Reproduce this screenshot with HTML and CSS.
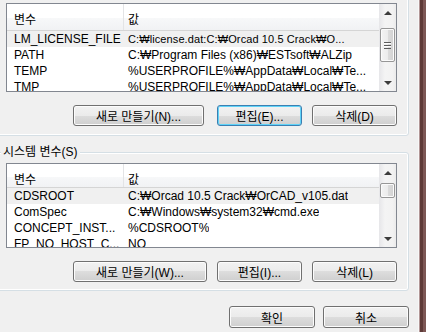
FILE: index.html
```html
<!DOCTYPE html>
<html lang="ko">

<head>
<title>환경 변수</title>
<meta charset="UTF-8">
<meta name="viewport" content="width=device-width, initial-scale=1.0">

<link rel="stylesheet" href="styles.css">
</head>

<body>
<div class="dialog">
<div class="pane">

<!-- user variables (group label is cut off above) -->
<div class="group group-user">
<div class="list list-user">
<div class="grid">
<div class="head"><span class="cell-name">변수</span><span class="cell-value">값</span></div>
<div class="row selected"><span class="cell-name">LM_LICENSE_FILE</span><span class="cell-value cell-long">C:₩license.dat:C:₩Orcad 10.5 Crack₩O...</span></div>
<div class="row"><span class="cell-name">PATH</span><span class="cell-value">C:₩Program Files (x86)₩ESTsoft₩ALZip</span></div>
<div class="row"><span class="cell-name">TEMP</span><span class="cell-value">%USERPROFILE%₩AppData₩Local₩Te...</span></div>
<div class="row"><span class="cell-name">TMP</span><span class="cell-value">%USERPROFILE%₩AppData₩Local₩Te...</span></div>
</div>
<div class="vscroll">
<div class="arrow up"></div>
<div class="track"><div class="thumb"><span class="grip"></span></div></div>
<div class="arrow down"></div>
</div>
</div>
<div class="buttons">
<button class="btn btn-new">새로 만들기(N)...</button>
<button class="btn btn-default">편집(E)...</button>
<button class="btn">삭제(D)</button>
</div>
</div>

<!-- system variables -->
<fieldset class="group group-system">
<legend>시스템 변수(S)</legend>
<div class="list list-system">
<div class="grid">
<div class="head"><span class="cell-name">변수</span><span class="cell-value">값</span></div>
<div class="row selected"><span class="cell-name">CDSROOT</span><span class="cell-value">C:₩Orcad 10.5 Crack₩OrCAD_v105.dat</span></div>
<div class="row"><span class="cell-name">ComSpec</span><span class="cell-value">C:₩Windows₩system32₩cmd.exe</span></div>
<div class="row"><span class="cell-name">CONCEPT_INST...</span><span class="cell-value">%CDSROOT%</span></div>
<div class="row"><span class="cell-name">FP_NO_HOST_C...</span><span class="cell-value">NO</span></div>
</div>
<div class="vscroll">
<div class="arrow up"></div>
<div class="track"><div class="thumb"></div></div>
<div class="arrow down"></div>
</div>
</div>
<div class="buttons">
<button class="btn btn-new">새로 만들기(W)...</button>
<button class="btn">편집(I)...</button>
<button class="btn">삭제(L)</button>
</div>
</fieldset>

<div class="actions">
<button class="btn btn-action">확인</button>
<button class="btn btn-action">취소</button>
</div>

</div>
<div class="frame"></div>
</div>
</body>
</html>
```

FILE: styles.css
```css
body {
    margin: 0;
    background: #f0f0f0;
    font-family: "Liberation Sans", "Noto Sans CJK KR", sans-serif;
    font-size: 12px;
    color: #000;
    overflow: hidden;
}
.dialog {
    display: flex;
    width: 426px;
    height: 332px;
    overflow: hidden;
}
.pane {
    width: 418px;
    flex: none;
}
.frame {
    width: 8px;
    flex: none;
    background: linear-gradient(to right, #f8f8f8 0 1px, #b39898 1px 2px, #5e3a38 2px 5px, #7d5755 5px 8px);
}

/* group boxes */
.group {
    box-sizing: border-box;
    width: 419px;
    margin: 0 0 0 -10px;
    border: 1px solid #d5dfe5;
    border-radius: 3px;
    box-shadow: inset 0 0 0 1px #fff;
}
.group-user {
    margin-top: -20px;
    padding: 22px 11px 9px 15px;
}
.group-system {
    margin-top: 9px;
    padding: 4px 11px 8px 15px;
    min-inline-size: 0;
}
.group-system legend {
    padding: 0 2px;
    margin-left: -5px;
    line-height: 14px;
    background: #f0f0f0;
}

/* list views */
.list {
    display: flex;
    box-sizing: border-box;
    width: 391px;
    border: 1px solid #828790;
    background: #fff;
    overflow: hidden;
}
.list-user {
    height: 89px;
}
.list-system {
    height: 85px;
}
.grid {
    flex: 1;
    min-width: 0;
    overflow: hidden;
}
.head {
    display: flex;
    height: 26px;
    border-bottom: 1px solid #d5d5d5;
    background: linear-gradient(#fff 55%, #f7f8f9 55%, #f1f2f4);
}
.list-system .head {
    height: 23px;
}
.head span {
    padding-top: 9px;
    line-height: 14px;
}
.head .cell-name {
    border-right: 1px solid #e3e4e6;
}
.row {
    display: flex;
    height: 16px;
    line-height: 16px;
    white-space: nowrap;
}
.row.selected {
    background: #f0f0f0;
}
.cell-name {
    box-sizing: border-box;
    width: 117px;
    flex: none;
    padding-left: 7px;
    overflow: hidden;
    white-space: nowrap;
}
.cell-value {
    padding-left: 4px;
    overflow: hidden;
    white-space: nowrap;
}
.cell-long {
    font-size: 11px;
    letter-spacing: 0.1px;
}

/* scrollbars */
.vscroll {
    width: 17px;
    flex: none;
    display: flex;
    flex-direction: column;
    background: linear-gradient(to right, #e6e6e9, #f4f4f4 35%, #f2f2f2 80%, #ebebeb);
}
.arrow {
    height: 17px;
    flex: none;
    display: flex;
    align-items: center;
    justify-content: center;
}
.arrow::before {
    content: "";
    border-left: 4px solid transparent;
    border-right: 4px solid transparent;
}
.arrow.up::before {
    border-bottom: 4px solid #3c3c3c;
}
.arrow.down::before {
    border-top: 4px solid #3c3c3c;
}
.track {
    flex: 1;
    padding: 0 1px;
}
.thumb {
    box-sizing: border-box;
    display: flex;
    align-items: center;
    justify-content: center;
    border: 1px solid #979797;
    border-radius: 2px;
    background: linear-gradient(to right, #f3f3f3, #ececec 50%, #dcdcdc 50%, #d2d2d2);
    box-shadow: inset 0 0 0 1px #fbfbfb;
}
.list-user .thumb {
    margin-top: 7px;
    height: 34px;
}
.list-system .thumb {
    margin-top: 2px;
    height: 15px;
}
.grip {
    width: 7px;
    height: 7px;
    background: repeating-linear-gradient(#5c5c5c 0 1px, #fdfdfd 1px 2px, transparent 2px 3px);
}

/* buttons */
.buttons {
    display: flex;
    justify-content: flex-end;
    gap: 10px;
    margin-top: 13px;
}
.btn {
    box-sizing: border-box;
    width: 85px;
    height: 21px;
    padding: 0;
    border: 1px solid #707070;
    border-radius: 3px;
    background: linear-gradient(#f2f2f2, #ebebeb 50%, #dddddd 50%, #cfcfcf);
    box-shadow: inset 0 0 0 1px #fcfcfc;
    font: inherit;
    color: #000;
}
.btn-new {
    width: 134px;
}
.group-user .btn-new {
    width: 131px;
    margin-right: 3px;
}
.btn-default {
    border-color: #3c7fb1;
    box-shadow: inset 0 0 0 1px #5fd3f8;
}
.actions {
    display: flex;
    justify-content: flex-end;
    gap: 8px;
    width: 409px;
    margin-top: 15px;
}
.btn-action {
    width: 86px;
    height: 22px;
}
```
